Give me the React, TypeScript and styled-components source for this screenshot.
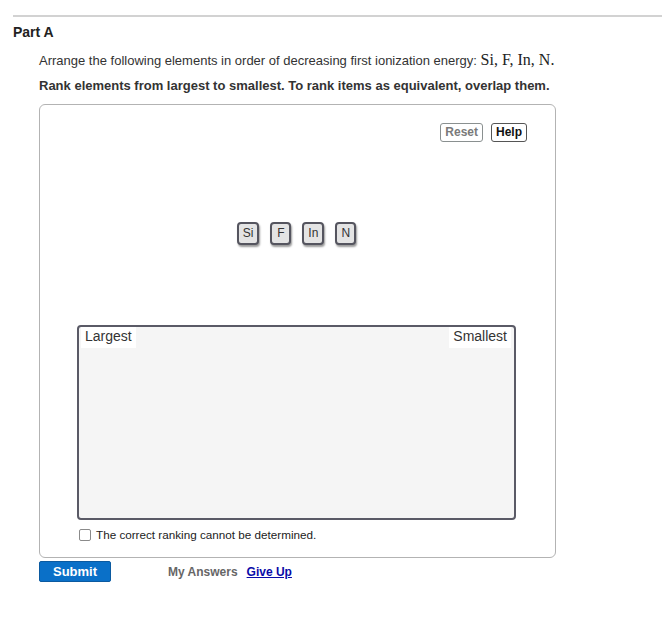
import React from "react";
import styled, { createGlobalStyle } from "styled-components";

const GlobalStyle = createGlobalStyle`
  body {
    margin: 0;
    background: #fff;
    font-family: "Liberation Sans", Arial, sans-serif;
    color: #222;
  }
`;

const Page = styled.div`
  padding: 15px 0 0 13px;
`;

const Rule = styled.div`
  border-top: 2px solid #d2d2d2;
`;

const PartTitle = styled.h2`
  margin: 7px 0 0;
  font-size: 14px;
  line-height: 16px;
  font-weight: bold;
  color: #222;
`;

const Content = styled.div`
  padding-left: 26px;
`;

const Prompt = styled.p`
  margin: 12px 0 0;
  font-size: 13px;
  line-height: 16px;
  color: #333;
`;

const Math = styled.span`
  font-family: "Liberation Serif", "Times New Roman", serif;
  font-size: 16px;
  color: #222;
`;

const Instruction = styled.p`
  margin: 9px 0 0;
  font-size: 13px;
  line-height: 16px;
  font-weight: bold;
  color: #333;
`;

const Panel = styled.div`
  box-sizing: border-box;
  margin-top: 10px;
  width: 517px;
  height: 454px;
  border: 1px solid #b3b3b3;
  border-radius: 6px;
  padding: 18px 27px 0 37px;
  display: flex;
  flex-direction: column;
`;

const Toolbar = styled.div`
  display: flex;
  justify-content: flex-end;
  gap: 8px;
  padding-right: 1px;
`;

const ToolButton = styled.button<{ $muted?: boolean }>`
  box-sizing: border-box;
  height: 19px;
  padding: 0 4px;
  border: 1px solid ${(p) => (p.$muted ? "#8a9090" : "#555")};
  border-radius: 3px;
  background: #fff;
  font-family: "Liberation Sans", Arial, sans-serif;
  font-size: 12px;
  font-weight: bold;
  color: ${(p) => (p.$muted ? "#7a7a7a" : "#111")};
  line-height: 17px;
`;

const TileRow = styled.div`
  margin-top: 80px;
  display: flex;
  justify-content: center;
  gap: 11px;
  padding-right: 12px;
`;

const Tile = styled.div`
  box-sizing: border-box;
  min-width: 21px;
  height: 23px;
  padding: 0 4px;
  border: 2px solid #55555f;
  border-radius: 4px;
  background: #e4e4e4;
  box-shadow: 1px 2px 2px rgba(0, 0, 0, 0.4);
  font-size: 12px;
  line-height: 19px;
  color: #333;
  text-align: center;
`;

const RankBox = styled.div`
  box-sizing: border-box;
  margin-top: 80px;
  width: 439px;
  height: 195px;
  border: 2px solid #5a5a66;
  border-radius: 4px;
  background: #f5f5f5;
  display: flex;
  justify-content: space-between;
  align-items: flex-start;
  padding: 0 3px 0 2px;
`;

const RankLabel = styled.span`
  background: #fff;
  padding: 1px 4px 4px;
  font-size: 14px;
  line-height: 16px;
  color: #333;
`;

const CheckRow = styled.label`
  margin-top: 8px;
  display: flex;
  align-items: center;
  gap: 5px;
  font-size: 11.7px;
  color: #222;
`;

const Box = styled.span`
  box-sizing: border-box;
  width: 12px;
  height: 12px;
  margin-left: 2px;
  border: 1px solid #8a8a8a;
  border-radius: 2px;
  background: #fff;
`;

const Footer = styled.div`
  margin-top: 3px;
  display: flex;
  align-items: center;
`;

const SubmitButton = styled.button`
  box-sizing: border-box;
  width: 72px;
  height: 21px;
  border: 1px solid #0b5aa0;
  border-radius: 2px;
  background: #0a70c8;
  color: #fff;
  font-family: "Liberation Sans", Arial, sans-serif;
  font-size: 13px;
  font-weight: bold;
  padding: 0;
`;

const FooterLink = styled.a<{ $active?: boolean }>`
  margin-left: ${(p) => (p.$active ? "9px" : "57px")};
  font-size: 12px;
  font-weight: bold;
  color: ${(p) => (p.$active ? "#0a0aa8" : "#666")};
  text-decoration: ${(p) => (p.$active ? "underline" : "none")};
`;

const tiles = ["Si", "F", "In", "N"];

export default function App() {
  return (
    <>
      <GlobalStyle />
      <Page>
        <Rule />
        <PartTitle>Part A</PartTitle>
        <Content>
          <Prompt>
            Arrange the following elements in order of decreasing first ionization energy:{" "}
            <Math>Si, F, In, N.</Math>
          </Prompt>
          <Instruction>
            Rank elements from largest to smallest. To rank items as equivalent, overlap them.
          </Instruction>
          <Panel>
            <Toolbar>
              <ToolButton $muted>Reset</ToolButton>
              <ToolButton>Help</ToolButton>
            </Toolbar>
            <TileRow>
              {tiles.map((t) => (
                <Tile key={t}>{t}</Tile>
              ))}
            </TileRow>
            <RankBox>
              <RankLabel>Largest</RankLabel>
              <RankLabel>Smallest</RankLabel>
            </RankBox>
            <CheckRow>
              <Box />
              The correct ranking cannot be determined.
            </CheckRow>
          </Panel>
          <Footer>
            <SubmitButton>Submit</SubmitButton>
            <FooterLink>My Answers</FooterLink>
            <FooterLink $active href="#">Give Up</FooterLink>
          </Footer>
        </Content>
      </Page>
    </>
  );
}
